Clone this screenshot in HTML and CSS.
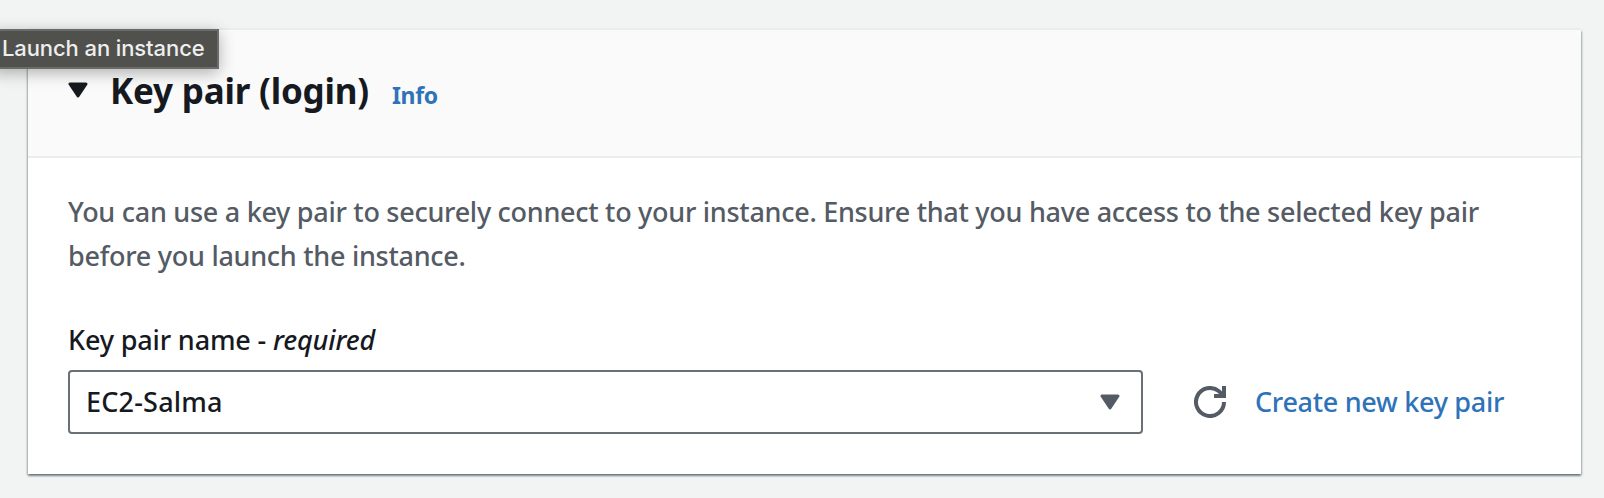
FILE: index.html
```html
<!DOCTYPE html>
<html lang="en">
<head>
<meta charset="utf-8">
<title>Launch an instance</title>
<link rel="stylesheet" href="styles.css">
</head>
<body>
<main class="page">
  <section class="card">
    <header class="card-header">
      <svg class="caret" viewBox="0 0 20 16"><path d="M2 2H18L10 14Z"/></svg>
      <h2 class="title"><span>Key pair (login)</span></h2>
      <a class="info">Info</a>
    </header>
    <div class="card-body">
      <p class="description">You can use a key pair to securely connect to your instance. Ensure that you have access to the selected key pair<br>before you launch the instance.</p>
      <div class="label">Key pair name - <em>required</em></div>
      <div class="controls">
        <div class="select">
          <span class="value">EC2-Salma</span>
          <svg class="caret" viewBox="0 0 20 16"><path d="M2 2H18L10 14Z"/></svg>
        </div>
        <svg class="refresh" viewBox="0 0 32 32"><path d="M30 16A14 14 0 1 1 25 5.3Q27 7 29 10"/><path d="M20 10H30V0"/></svg>
        <a class="create">Create new key pair</a>
      </div>
    </div>
  </section>
  <div class="tooltip"><span>Launch an instance</span></div>
</main>
</body>
</html>
```
FILE: styles.css
```css
* { box-sizing: border-box; }
body {
  margin: 0;
  background: #f2f3f3;
  color: #16191f;
  font-family: "Noto Sans", sans-serif;
  font-size: 27px;
  font-weight: 500;
}
.page {
  position: relative;
  height: 498px;
  padding: 30px 23px 24px 28px;
  overflow: hidden;
}
.card {
  height: 444px;
  background: #fff;
  box-shadow: 0 -2px 0 #eaeded, 0 2px 2px rgba(0, 28, 36, .4), 1px 1px 2px rgba(0, 28, 36, .2), -1px 1px 2px rgba(0, 28, 36, .2);
}
.card-header {
  display: flex;
  align-items: baseline;
  height: 128px;
  padding: 37px 40px 0;
  background: #fafafa;
  border-bottom: 2px solid #eaeded;
}
.caret {
  flex: none;
  width: 20px;
  height: 16px;
  fill: #545b64;
  stroke: #545b64;
  stroke-width: 3;
  stroke-linejoin: round;
}
.card-header .caret {
  align-self: flex-start;
  margin: 15px 22px 0 0;
  fill: #16191f;
  stroke: #16191f;
}
.title {
  width: 282px;
  margin: 0;
  font-size: 35px;
  line-height: 48px;
  font-weight: 700;
  white-space: nowrap;
  letter-spacing: -.2px;
}
.info {
  color: #2e73b8;
  font-size: 23px;
  font-weight: 700;
  letter-spacing: -.35px;
}
.card-body { padding: 32px 40px 0; }
.description {
  margin: 0;
  color: #545b64;
  line-height: 44px;
  white-space: nowrap;
  letter-spacing: -.28px;
}
.label {
  margin-top: 40px;
  line-height: 44px;
  letter-spacing: -.15px;
}
.controls {
  display: flex;
  align-items: center;
  margin-top: 8px;
}
.select {
  display: flex;
  align-items: center;
  justify-content: space-between;
  width: 1075px;
  height: 64px;
  padding: 0 21px 0 16px;
  border: 2px solid #687078;
  border-radius: 4px;
  letter-spacing: .2px;
}
.value { padding-bottom: 2px; }
.refresh {
  width: 32px;
  height: 32px;
  margin: 0 29px 0 51px;
  fill: none;
  stroke: #545b64;
  stroke-width: 4;
}
.create {
  padding-bottom: 2px;
  color: #2e73b8;
  letter-spacing: -.3px;
}
.tooltip {
  position: absolute;
  top: 29px;
  left: -8px;
  width: 227px;
  height: 40px;
  padding-left: 8px;
  border: 2px solid #6b6b69;
  background: #50504d;
  box-shadow: 0 4px 16px rgba(0, 0, 0, .3);
  color: #eee;
  font: 500 22px/35px Inter, sans-serif;
  letter-spacing: -.1px;
}
```
